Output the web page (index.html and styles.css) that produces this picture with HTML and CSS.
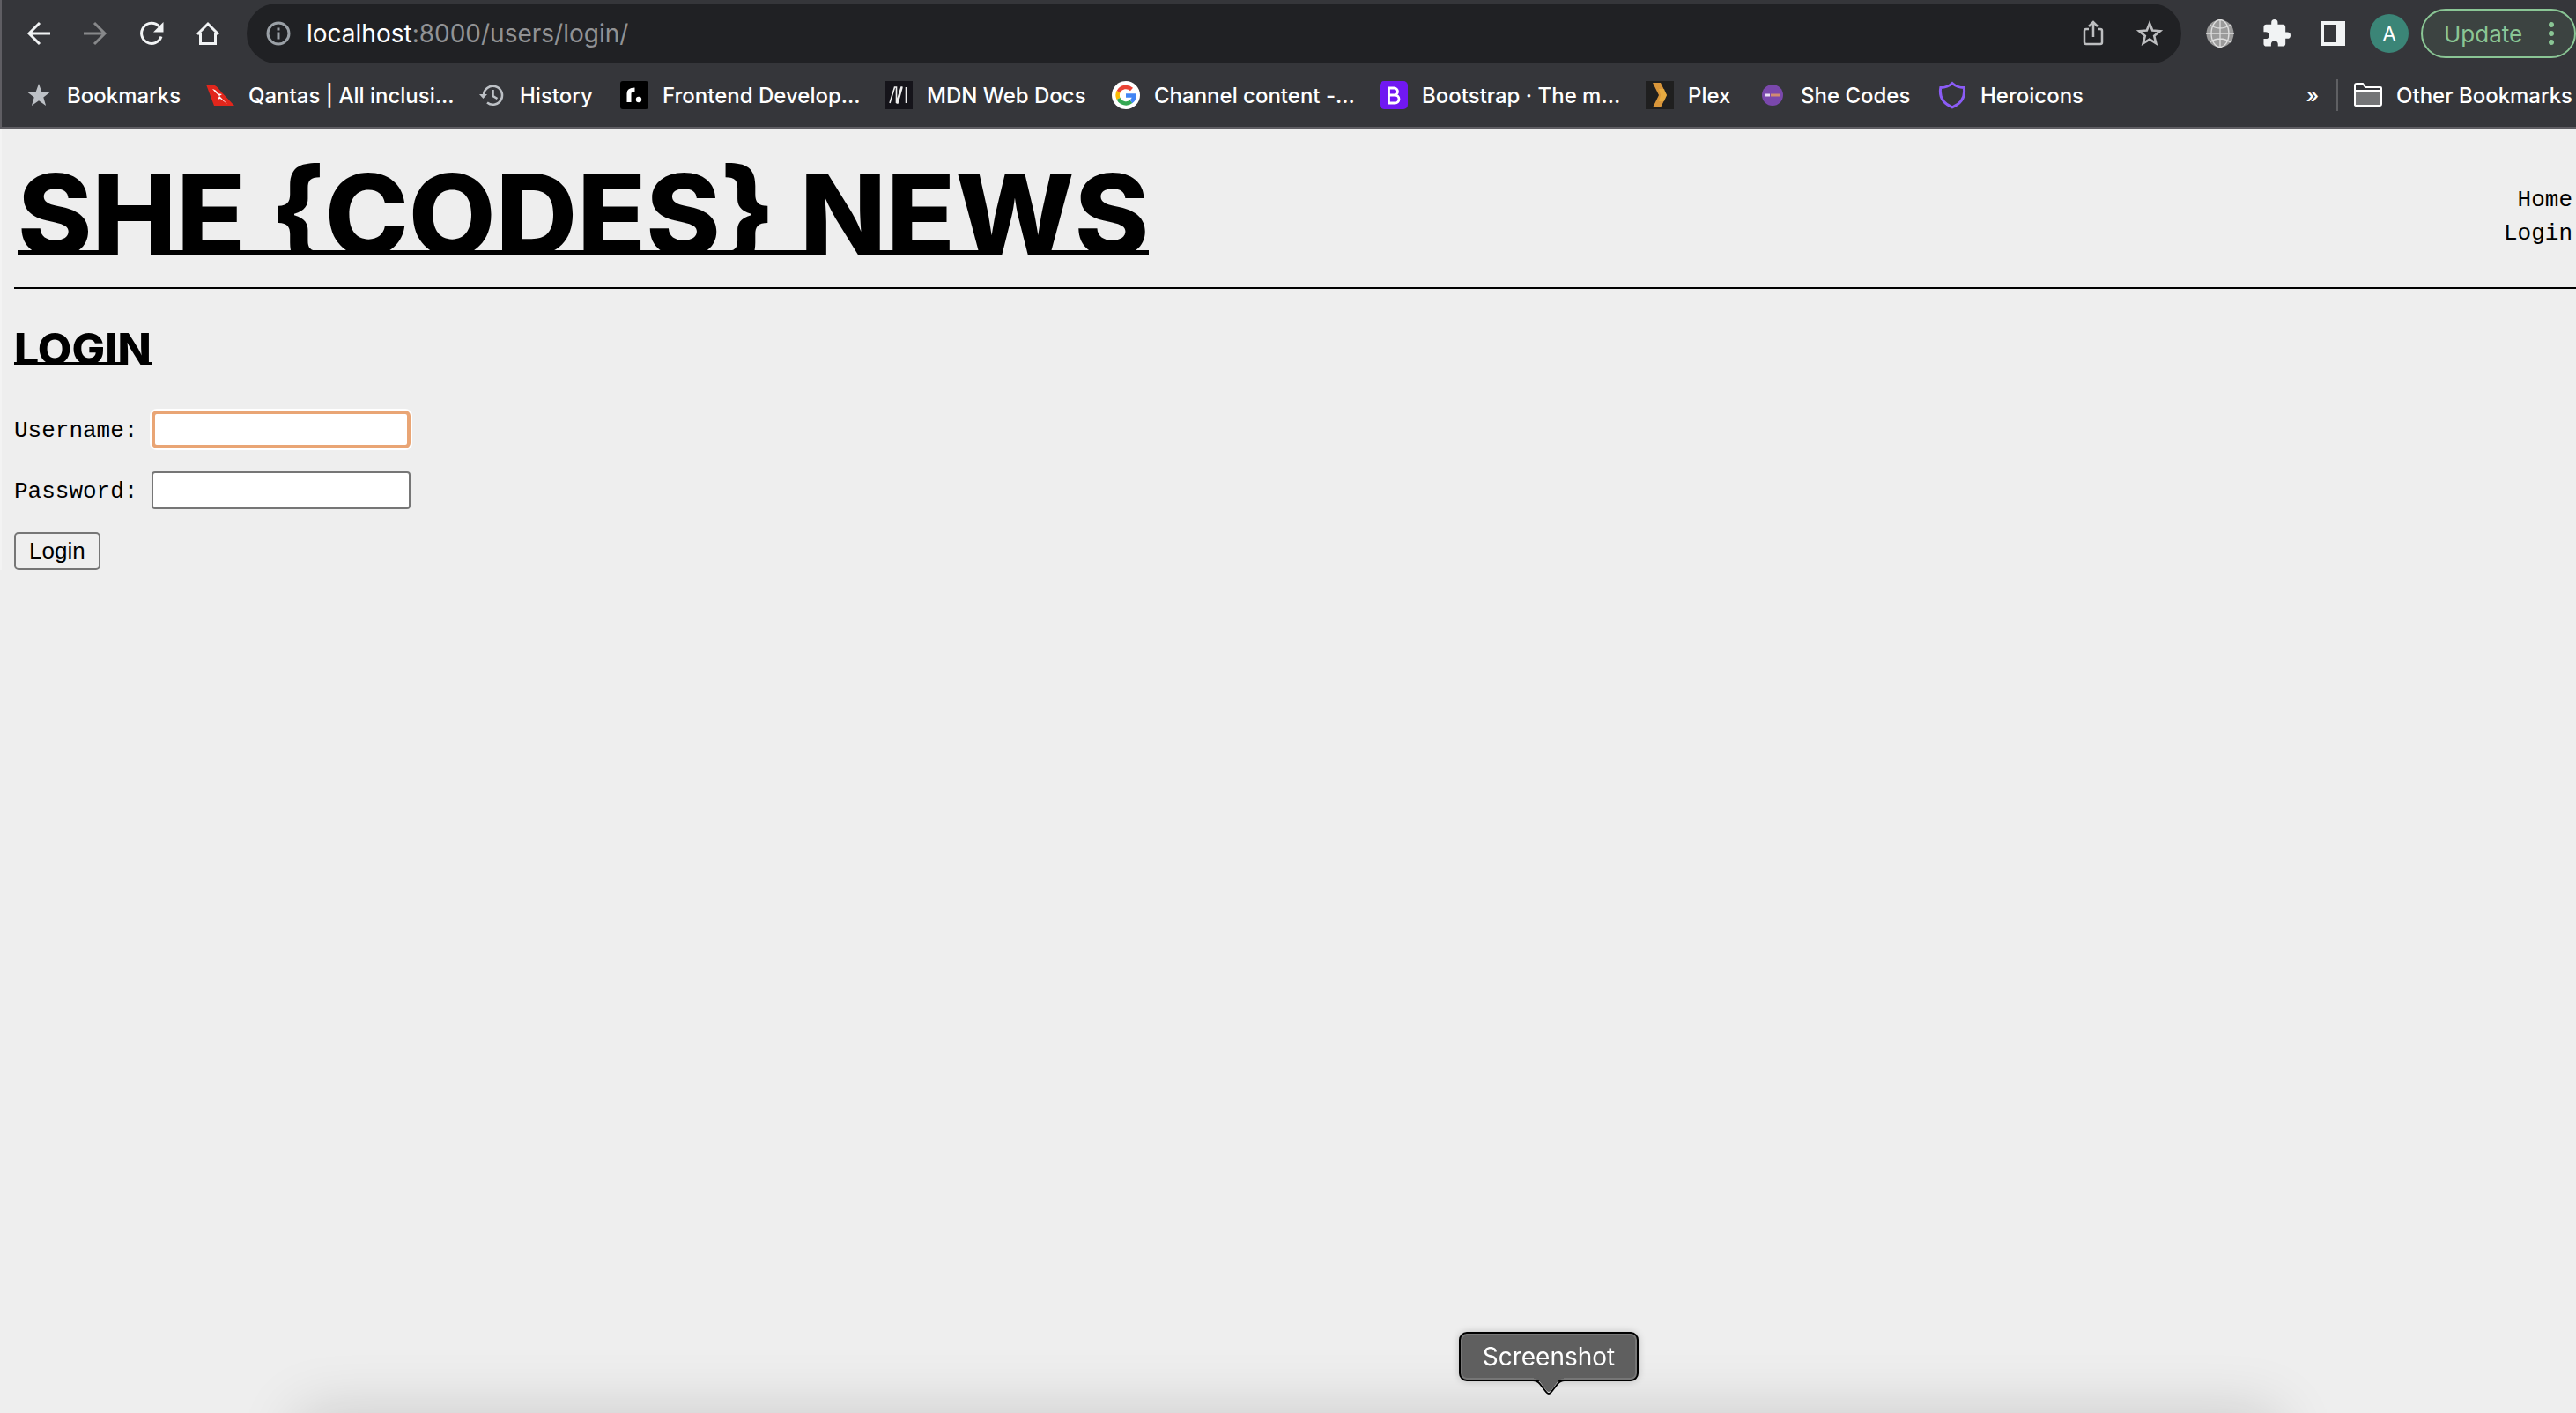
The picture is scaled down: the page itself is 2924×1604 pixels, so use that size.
FILE: index.html
```html
<!DOCTYPE html>
<html lang="en">
<head>
<meta charset="utf-8">
<title>She Codes News – Login</title>
<link rel="stylesheet" href="styles.css">
</head>
<body>
<div class="browser">
  <div class="toolbar">
    <div class="nav-buttons">
      <button class="icon-btn" aria-label="Back"><svg width="32" height="32" viewBox="0 0 32 32" fill="none" stroke="#f1f3f4" stroke-width="3"><path d="M29 16H5M17 4 5 16l12 12"/></svg></button>
      <button class="icon-btn" aria-label="Forward"><svg width="32" height="32" viewBox="0 0 32 32" fill="none" stroke="#87888a" stroke-width="3"><path d="M3 16h24M15 4l12 12-12 12"/></svg></button>
      <button class="icon-btn" aria-label="Reload"><svg width="32" height="32" viewBox="0 0 32 32"><path d="M27 19.500A11.500 11.500 0 1 1 24.500 8" fill="none" stroke="#f1f3f4" stroke-width="3"/><path d="M29.500 3v11.500H18z" fill="#f1f3f4"/></svg></button>
      <button class="icon-btn" aria-label="Home"><svg width="32" height="32" viewBox="0 0 32 32" fill="none" stroke="#f1f3f4" stroke-width="3"><path d="M4 17 16 5l12 12M7.500 15v12.500h17V15"/></svg></button>
    </div>
    <div class="address">
      <svg width="32" height="32" viewBox="0 0 32 32" fill="none" stroke="#9aa0a6" stroke-width="3"><circle cx="16" cy="16" r="12"/><path d="M16 14.500v8M16 9.500v3"/></svg>
      <span class="url"><span class="host">localhost</span>:8000/users/login/</span>
      <button class="icon-btn" aria-label="Share"><svg width="32" height="32" viewBox="0 0 32 32" fill="none" stroke="#bdbec0" stroke-width="2.500"><path d="M11 11H8a2 2 0 0 0-2 2v13a2 2 0 0 0 2 2h16a2 2 0 0 0 2-2V13a2 2 0 0 0-2-2h-3M16 20V3.500M11 8l5-5 5 5"/></svg></button>
      <button class="icon-btn" aria-label="Bookmark this page"><svg width="32" height="32" viewBox="0 0 32 32" fill="none" stroke="#bdbec0" stroke-width="2.600"><path d="m16 4.500 3.200 8.100 8.700.600-6.700 5.600 2.100 8.400L16 22.600l-7.300 4.600 2.100-8.400-6.700-5.600 8.700-.600z"/></svg></button>
    </div>
    <div class="extensions">
      <button class="icon-btn" aria-label="Globe extension"><svg width="32" height="32" viewBox="0 0 32 32"><circle cx="16" cy="16" r="15.500" fill="#9b9b9b"/><g fill="none" stroke="#dedede" stroke-width="1.300"><path d="M16 0v32M0 16h32M4 6q12 8 24 0M4 26q12-8 24 0"/><ellipse cx="16" cy="16" rx="10" ry="15.500"/></g></svg></button>
      <button class="icon-btn" aria-label="Extensions"><svg width="32" height="32" viewBox="1 1 22 22" fill="#f1f3f4"><path d="M20.500 11H19V7c0-1.100-.9-2-2-2h-4V3.500a2.500 2.500 0 0 0-5 0V5H4c-1.100 0-2 .9-2 2v3.800h1.500a2.700 2.700 0 0 1 0 5.400H2V20c0 1.100.9 2 2 2h3.800v-1.500a2.700 2.700 0 0 1 5.400 0V22H17c1.100 0 2-.9 2-2v-4h1.500a2.500 2.500 0 0 0 0-5z"/></svg></button>
      <button class="icon-btn" aria-label="Side panel"><svg width="32" height="32" viewBox="0 0 32 32"><path fill="#f1f3f4" fill-rule="evenodd" d="M2 2h28v28H2zM6 6v20h14V6z"/></svg></button>
      <button class="avatar" aria-label="Profile">A</button>
    </div>
    <button class="update">Update<svg width="8" height="28" viewBox="0 0 8 28" fill="#8ac695"><circle cx="4" cy="4" r="3"/><circle cx="4" cy="14" r="3"/><circle cx="4" cy="24" r="3"/></svg></button>
  </div>
  <nav class="bookmarks" aria-label="Bookmarks bar">
    <div class="bookmark-list">
      <a href="#"><svg width="32" height="32" viewBox="0 0 32 32" fill="#bdc1c6"><path d="m16 3 3.300 9.200 9.700.300-7.700 6 2.800 9.500L16 22.300 7.900 28l2.800-9.500-7.700-6 9.700-.300z"/></svg>Bookmarks</a>
      <a href="#"><svg width="32" height="32" viewBox="0 0 32 32"><path fill="#e1261c" d="M0 4h7q5 1 9 7l16 17H9z"/><path fill="#fff" d="M7 9q5 1 6 5l5 1-3 2 4 4 5 5-8-6-3 1 2-4q-5-4-8-8z"/></svg>Qantas | All inclusi...</a>
      <a href="#"><svg width="32" height="32" viewBox="0 0 32 32" fill="none" stroke="#bdc1c6" stroke-width="2.600"><path d="M7 16A10.500 10.500 0 1 1 11 24.500M17.500 10v7l5 3"/><path d="M2 15h9l-4.500 5z" fill="#bdc1c6" stroke="none"/></svg>History</a>
      <a href="#"><svg width="32" height="32" viewBox="0 0 32 32"><rect width="32" height="32" rx="3"/><path d="M10 24V14q0-4 6.500-4" fill="none" stroke="#fff" stroke-width="5"/><circle cx="21" cy="21" r="3.200" fill="#fff"/></svg>Frontend Develop...</a>
      <a href="#"><svg width="32" height="32" viewBox="0 0 32 32"><path fill="#15141a" d="M0 0h32v32H0z"/><path d="m6 25 5.500-18h2v18l5.500-18h1.500M13.500 25h1.500l5-18M24.500 7v18" fill="none" stroke="#eee" stroke-width="1.600"/></svg>MDN Web Docs</a>
      <a href="#"><svg width="32" height="32" viewBox="0 0 32 32"><circle cx="16" cy="16" r="16" fill="#fff"/><g fill="none" stroke-width="4.500"><path stroke="#ea4335" d="M7.500 12.200A9.500 9.500 0 0 1 22.500 9.500"/><path stroke="#fbbc05" d="M7.500 20a9.500 9.500 0 0 1 0-8"/><path stroke="#34a853" d="M22 23.300A9.500 9.500 0 0 1 7.500 20"/><path stroke="#4285f4" d="M16 16.500h9.500q0 4.500-3.500 6.800"/></g></svg>Channel content -...</a>
      <a href="#"><svg width="32" height="32" viewBox="0 0 32 32"><rect width="32" height="32" rx="5" fill="#7018f2"/><path d="M10.500 8v17h7a4.400 4.400 0 0 0 0-9h-7 6a4 4 0 0 0 0-8z" fill="none" stroke="#fff" stroke-width="2.800"/></svg>Bootstrap · The m...</a>
      <a href="#"><svg width="32" height="32" viewBox="0 0 32 32"><path fill="#1f1f1f" d="M0 0h32v32H0z"/><path fill="#d9963a" d="M8 2h9l7 14-7 14H8l7-14z"/><path fill="#ecb845" d="m15 9 6 0 3 7-3 7h-6l2-7z" opacity=".6"/></svg>Plex</a>
      <a href="#"><svg width="32" height="32" viewBox="0 0 32 32"><circle cx="16" cy="16" r="12" fill="#7a48ac"/><path d="M7 16h6" stroke="#e9def5" stroke-width="3"/><path d="M14 16h11" stroke="#d08a72" stroke-width="3"/></svg>She Codes</a>
      <a href="#"><svg width="32" height="32" viewBox="0 0 32 32" fill="none" stroke="#8b5cf6" stroke-width="3"><path d="M16 2.500Q10.500 7.500 2.800 7.600 0 23 16 29.800 32 23 29.200 7.600 21.500 7.500 16 2.500z"/></svg>Heroicons</a>
    </div>
    <button class="overflow" aria-label="More bookmarks">»</button>
    <a class="other" href="#"><svg width="32" height="28" viewBox="0 0 32 28"><path fill="#747577" d="M2 9h28v16H2z"/><path fill="none" stroke="#fff" stroke-width="2" d="M1 25V3q0-2 2-2h7l3 4h17q1 0 1 1v18q0 2-2 2H3q-2 0-2-1zM1 9h30"/></svg>Other Bookmarks</a>
  </nav>
</div>

<div class="page">
  <header class="site-header">
    <h1><a href="#">S<span class="gap">H</span>E {CODES} <span class="gap">N</span>E<span class="gap gap-w">W</span>S</a></h1>
    <nav class="site-nav" aria-label="Site">
      <a href="#">Home</a>
      <a href="#">Login</a>
    </nav>
  </header>
  <main>
    <h2><span class="line">LOGI<span class="gap">N</span></span></h2>
    <form class="login-form">
      <p><label for="username">Username:</label><input id="username" class="focused" type="text"></p>
      <p><label for="password">Password:</label><input id="password" type="password"></p>
      <button class="submit" type="button">Login</button>
    </form>
  </main>
</div>

<div class="dock-shadow"></div>
<div class="tooltip" role="tooltip">Screenshot<svg class="tail" width="36" height="20" viewBox="0 0 36 20"><path d="M1 1Q6 1 9 6l6 8q3 4 6 0l6-8q3-5 8-5V0H1z" fill="#5f5f5f"/><path d="M0 3q5 0 8 4l7 9q3 4 6 0l7-9q3-4 8-4" fill="none" stroke="#000" stroke-width="2"/></svg></div>
</body>
</html>
```
FILE: styles.css
```css
* { box-sizing: border-box; }

body {
  margin: 0;
  min-height: 100vh;
  background: #eee;
  color: #000;
  font-family: "Liberation Mono", monospace;
  font-size: 26px;
  overflow-x: hidden;
}

a { color: inherit; text-decoration: none; }
button { font: inherit; color: inherit; background: none; border: 0; padding: 0; }
svg { display: block; flex: none; }

/* Browser chrome */
.browser {
  background: #35363a;
  color: #fff;
  border-bottom: 2px solid #5f5e63;
  border-left: 2px solid #5f5e63;
  font-family: Inter, sans-serif;
}

.toolbar {
  display: flex;
  align-items: center;
  height: 76px;
  padding-left: 26px;
}

.nav-buttons { display: flex; gap: 32px; margin-right: 28px; }

.address {
  flex: 1;
  display: flex;
  align-items: center;
  gap: 32px;
  height: 68px;
  padding: 0 20px;
  border-radius: 34px;
  background: #202124;
}

.url { flex: 1; margin-left: -16px; font-size: 28px; color: #919294; }
.host { color: #fff; }

.extensions { display: flex; align-items: center; gap: 32px; margin: 0 14px 0 28px; }

.avatar {
  width: 44px;
  height: 44px;
  margin: 0 0 0 -6px;
  border-radius: 50%;
  background: #3b8577;
  color: #fff;
  font-size: 22px;
}

.update {
  display: flex;
  align-items: center;
  justify-content: space-between;
  width: 176px;
  height: 56px;
  padding: 0 22px 0 24px;
  border: 2px solid #8ac695;
  border-radius: 28px;
  background: #3c4341;
  color: #8ac695;
  font-size: 26px;
}

.bookmarks {
  display: flex;
  align-items: center;
  height: 68px;
  padding: 0 4px 4px 26px;
  font-size: 24px;
  font-weight: 500;
  white-space: nowrap;
}

.bookmark-list {
  flex: 1;
  display: grid;
  grid-template-columns: 206px 308px 162px 300px 258px 304px 302px 128px 204px auto;
}

.bookmark-list a, .other { display: flex; align-items: center; gap: 16px; }
.overflow { margin-right: 20px; }
.other { height: 36px; padding-left: 18px; border-left: 2px solid #5f6063; }

/* Site */
.page { padding-left: 14px; border-left: 2px solid #f3f3f3; }

.site-header {
  display: flex;
  justify-content: space-between;
  align-items: flex-start;
  height: 182px;
  border-bottom: 2px solid #000;
}

h1, h2 { margin: 0; font-family: Inter, sans-serif; font-weight: 800; white-space: nowrap; }

h1 {
  margin-left: 4px;
  padding-top: 20px;
  font-size: 128px;
  line-height: 155px;
}

/* The title is cut flat along its underline */
h1::after {
  content: "";
  position: relative;
  display: block;
  height: 31px;
  margin-top: -31px;
  background: #eee;
}

h1 a, .line { display: block; background: linear-gradient(#000, #000) 0 118px / 100% 6px no-repeat; }
.gap { display: inline-block; background: linear-gradient(#eee, #eee) 50% 118px / 50% 6px no-repeat; }
.gap-w { background-size: 30% 6px; }

.site-nav {
  display: flex;
  flex-direction: column;
  align-items: flex-end;
  padding: 62px 4px 0 0;
  line-height: 38px;
}

h2 { display: flex; padding-top: 38px; font-size: 50px; line-height: 60px; }
.line { background-position: 0 45px; background-size: 100% 3px; }
.line .gap { background-position: 50% 45px; background-size: 50% 3px; }

.login-form { padding-top: 40px; }
.login-form p { display: flex; align-items: center; margin: 0 0 26px; }

.login-form label { width: 156px; padding-top: 2px; }

.login-form input {
  width: 294px;
  height: 43px;
  border: 2px solid #767676;
  border-radius: 4px;
  background: #fff;
  outline: 0;
}

.login-form .focused { border: 4px solid #e9a575; border-radius: 6px; box-shadow: 0 0 0 2px #fff; }

.submit {
  height: 43px;
  padding: 0 15px;
  border: 2px solid #767676;
  border-radius: 5px;
  background: #efefef;
  font-family: "Liberation Sans", sans-serif;
}

/* Desktop overlays */
.dock-shadow {
  position: fixed;
  top: 100%;
  right: 340px;
  left: 340px;
  height: 200px;
  box-shadow: 0 0 70px rgba(0, 0, 0, .16);
}

.tooltip {
  position: fixed;
  bottom: 36px;
  left: 1656px;
  width: 204px;
  height: 56px;
  border: 2px solid #000;
  border-radius: 9px;
  background: #5f5f5f;
  box-shadow: inset 0 0 0 2px #767676, 0 0 8px rgba(0, 0, 0, .2);
  color: #fff;
  font: 28px/52px Inter, sans-serif;
  text-align: center;
}

.tail { position: absolute; top: 50px; left: 82px; }
```
